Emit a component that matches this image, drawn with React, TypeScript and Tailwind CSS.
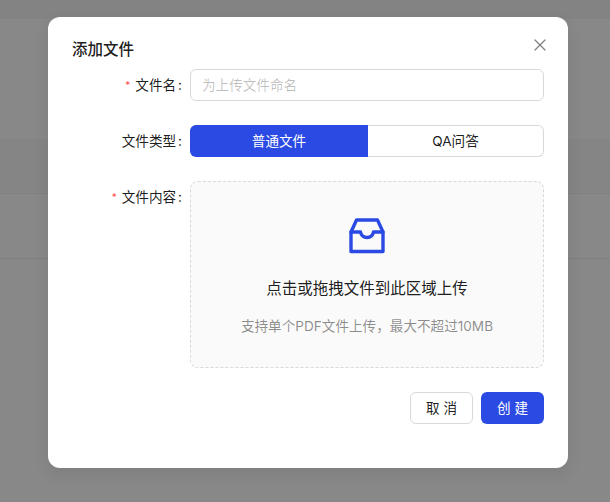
import React from 'react';
import { X } from 'lucide-react';

const FONT = "font-['Inter','Noto_Sans_CJK_SC',sans-serif]";

const FormRow: React.FC<{ label: string; required?: boolean; children: React.ReactNode; className?: string }> = (props) => {
  const { label, required, children, className } = props;
  return (
    <div className={`flex items-start ${className ?? ''}`}>
      <div className="flex h-8 w-[118px] shrink-0 items-center justify-end text-[13.6px] text-black/90">
        {required && <span className="mr-[5px] text-[10px] leading-none text-[#ff4d4f]">*</span>}
        <span>{label}</span>
        <span className="ml-[2px] mr-2">:</span>
      </div>
      <div className="w-[354px]">{children}</div>
    </div>
  );
};

const InboxIcon = () => (
  <svg width="38" height="38" viewBox="0 0 38 38" fill="none" stroke="#2b4ae3" strokeWidth="3.4" strokeLinejoin="round" strokeLinecap="round">
    <path d="M3 15 L8.5 3 H29.5 L35 15 V34.5 H3 Z" />
    <path d="M3 15 H12.5 C13.2 18.5 15.8 20.5 19 20.5 C22.2 20.5 24.8 18.5 25.5 15 H35" />
  </svg>
);

export default function App() {
  return (
    <div className={`relative h-[502px] w-[610px] overflow-hidden bg-[#888888] ${FONT}`}>
      {/* page behind the mask */}
      <div className="h-[19px] bg-[#838383]" />
      <div className="h-[120px]" />
      <div className="h-[55px] border-b border-[#7f7f7f] bg-[#858585]" />
      <div className="h-[65px] border-b border-[#7f7f7f]" />

      <div className="absolute left-12 top-[17px] h-[451px] w-[520px] rounded-xl bg-white px-6 pt-6 shadow-[0_6px_16px_rgba(0,0,0,0.08)]">
        <div className="text-[15.5px] leading-[18px] font-medium text-black/90">添加文件</div>
        <button className="absolute right-[18px] top-[18px] text-[#808080]">
          <X size={20} strokeWidth={1.5} />
        </button>

        <div className="mt-[10px] flex flex-col">
          <FormRow label="文件名" required>
            <input
              placeholder="为上传文件命名"
              className="h-8 w-full rounded-md border border-[#d9d9d9] bg-white px-[11px] text-[13.6px] outline-none placeholder:text-black/25"
            />
          </FormRow>

          <FormRow label="文件类型" className="mt-6">
            <div className="flex h-8 text-[13.6px]">
              <div className="flex w-[178px] items-center justify-center rounded-l-md bg-[#2b4ae3] text-white">普通文件</div>
              <div className="flex flex-1 items-center justify-center rounded-r-md border border-l-0 border-[#d9d9d9] text-black/90">QA问答</div>
            </div>
          </FormRow>

          <FormRow label="文件内容" required className="mt-6">
            <div className="flex h-[187px] flex-col items-center rounded-lg border border-dashed border-[#d9d9d9] bg-[#fafafa] pt-[35px]">
              <InboxIcon />
              <div className="mt-[22px] text-[15.5px] leading-6 text-black/90">点击或拖拽文件到此区域上传</div>
              <div className="mt-[14px] text-[13.6px] leading-[22px] text-black/45">支持单个PDF文件上传，最大不超过10MB</div>
            </div>
          </FormRow>
        </div>

        <div className="mt-6 flex justify-end gap-2 text-[13.6px]">
          <button className="h-8 w-[63px] rounded-md border border-[#d9d9d9] bg-white text-black/90">取 消</button>
          <button className="h-8 w-[63px] rounded-md bg-[#2b4ae3] text-white">创 建</button>
        </div>
      </div>
    </div>
  );
}
